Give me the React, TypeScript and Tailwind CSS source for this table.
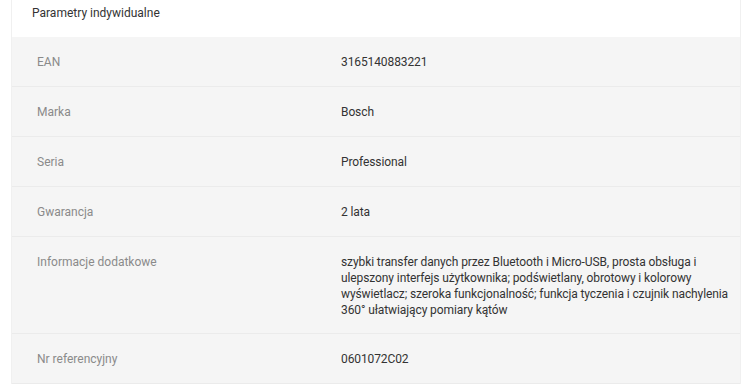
const rows: { label: string; value: string }[] = [
  { label: 'EAN', value: '3165140883221' },
  { label: 'Marka', value: 'Bosch' },
  { label: 'Seria', value: 'Professional' },
  { label: 'Gwarancja', value: '2 lata' },
  {
    label: 'Informacje dodatkowe',
    value:
      'szybki transfer danych przez Bluetooth i Micro-USB, prosta obsługa i ulepszony interfejs użytkownika; podświetlany, obrotowy i kolorowy wyświetlacz; szeroka funkcjonalność; funkcja tyczenia i czujnik nachylenia 360° ułatwiający pomiary kątów',
  },
  { label: 'Nr referencyjny', value: '0601072C02' },
];

export default function App() {
  return (
    <div className="w-[750px] h-[386px] bg-white pl-[11px] font-['Roboto',sans-serif] text-[12px]">
      <div className="w-[730px] border-x border-[#f0f0f0]">
        <div className="h-[37px] pl-5 pt-[5px] leading-4 text-[#333]">Parametry indywidualne</div>
        <div className="bg-[#f5f5f5]">
          {rows.map(row => (
            <div
              key={row.label}
              className="grid grid-cols-[304px_1fr] items-start min-h-[50px] border-b border-[#ebebeb] pl-[25px] pr-[8px] pt-[17px] pb-[15px] leading-4"
            >
              <div className="text-[#8a8a8a]">{row.label}</div>
              <div className="text-[#333] tracking-[-0.1px]">{row.value}</div>
            </div>
          ))}
        </div>
      </div>
    </div>
  );
}
